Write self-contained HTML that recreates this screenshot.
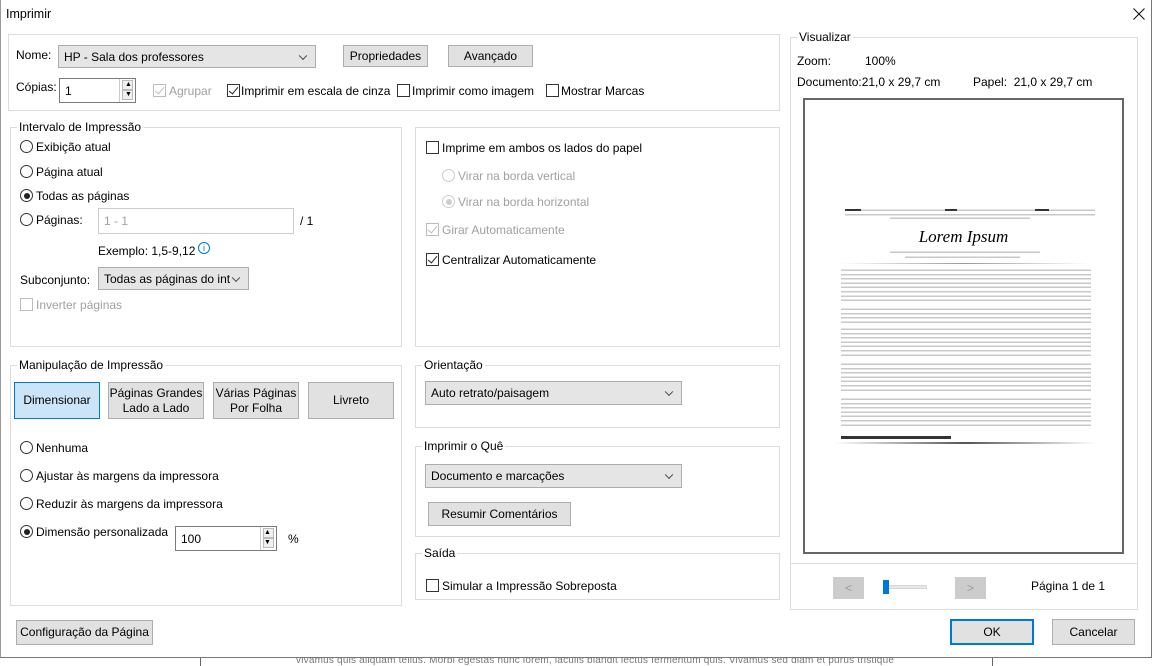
<!DOCTYPE html>
<html><head><meta charset="utf-8"><style>
*{box-sizing:border-box;margin:0;padding:0}
body{width:1155px;height:666px;overflow:hidden;background:#fff;font-family:"Liberation Sans",sans-serif;font-size:12px;color:#000;position:relative}
.a{position:absolute;white-space:nowrap}
.win{position:absolute;left:0;top:0;width:1152px;height:658px;background:#fff;border:1px solid #777;border-top:none;border-left:1px solid #999}
.grp{position:absolute;border:1px solid #dcdcdc}
.lg{position:absolute;background:#fff;padding:0 2px;top:-8px;left:6px;font-size:12px;white-space:nowrap}
.btn{position:absolute;background:#e1e1e1;border:1px solid #adadad;display:flex;align-items:center;justify-content:center;text-align:center;line-height:15px}
.sel{position:absolute;background:#e5e5e5;border:1px solid #adadad;padding-left:5px;display:flex;align-items:center;white-space:nowrap}
.sel:after{content:"";position:absolute;right:9px;top:50%;width:5px;height:5px;border-right:1px solid #444;border-bottom:1px solid #444;transform:translateY(-70%) rotate(45deg)}
.cb{position:absolute;width:13px;height:13px;border:1px solid #333;background:#fff}
.cb.ck:after{content:"";position:absolute;left:3px;top:0px;width:4px;height:8px;border-right:1.5px solid #222;border-bottom:1.5px solid #222;transform:rotate(40deg)}
.cb.dis{border-color:#bcbcbc}
.cb.dis.ck:after{border-color:#bcbcbc}
.rd{position:absolute;width:13px;height:13px;border:1px solid #333;border-radius:50%;background:#fff}
.rd.on:after{content:"";position:absolute;left:2.5px;top:2.5px;width:6px;height:6px;border-radius:50%;background:#222}
.rd.dis{border-color:#ccc}
.rd.dis.on:after{background:#ccc}
.gray{color:#a0a0a0}
.inp{position:absolute;border:1px solid #7a7a7a;background:#fff;padding-left:5px;display:flex;align-items:center}
.spin{position:absolute;right:0;top:0;width:16px;height:100%;border-left:1px solid #ccc}
.spin i{position:absolute;left:2px;width:11px;height:10px;background:#f0f0f0;border:1px solid #bbb}
.lines{position:absolute;background:repeating-linear-gradient(#fff 0,#fff 1.5px,#c8c8c8 1.5px,#c8c8c8 3px,#fff 3px,#fff 4.3px)}
</style></head><body>
<div class="a" style="left:200px;top:656px;width:1px;height:10px;background:#666"></div>
<div class="a" style="left:992px;top:656px;width:1px;height:10px;background:#666"></div>
<div class="a" style="left:296px;top:655px;font-size:10px;color:#777;letter-spacing:0.2px">vivamus quis aliquam tellus. Morbi egestas nunc lorem, iaculis blandit lectus fermentum quis. Vivamus sed diam et purus tristique</div>
<div class="win">
<div class="a" style="left:5px;top:7px;font-size:12.5px">Imprimir</div>
<svg class="a" style="left:1132px;top:8px" width="12" height="12" viewBox="0 0 12 12"><path d="M0.5 0.5L11.5 11.5M11.5 0.5L0.5 11.5" stroke="#111" stroke-width="1.1"/></svg>

<div class="grp" style="left:7px;top:34px;width:772px;height:77px"></div>
<div class="a" style="left:15px;top:48px">Nome:</div>
<div class="sel" style="left:57px;top:45px;width:258px;height:23px">HP - Sala dos professores</div>
<div class="btn" style="left:342px;top:45px;width:85px;height:22px">Propriedades</div>
<div class="btn" style="left:447px;top:45px;width:85px;height:22px">Avançado</div>
<div class="a" style="left:15px;top:80px">Cópias:</div>
<div class="inp" style="left:58px;top:78px;width:77px;height:25px">1<div class="spin"><i style="top:1px"></i><i style="top:11px"></i></div></div>
<div class="a" style="left:124px;top:81px;font-size:7px">▲</div><div class="a" style="left:124px;top:91px;font-size:7px">▼</div>
<div class="cb dis ck" style="left:152px;top:84px"></div><div class="a gray" style="left:168px;top:84px">Agrupar</div>
<div class="cb ck" style="left:226px;top:84px"></div><div class="a" style="left:240px;top:84px">Imprimir em escala de cinza</div>
<div class="cb" style="left:396px;top:84px"></div><div class="a" style="left:411px;top:84px">Imprimir como imagem</div>
<div class="cb" style="left:545px;top:84px"></div><div class="a" style="left:560px;top:84px">Mostrar Marcas</div>

<div class="grp" style="left:9px;top:127px;width:392px;height:220px"><div class="lg">Intervalo de Impressão</div></div>
<div class="rd" style="left:19px;top:140px"></div><div class="a" style="left:35px;top:140px">Exibição atual</div>
<div class="rd" style="left:19px;top:165px"></div><div class="a" style="left:35px;top:165px">Página atual</div>
<div class="rd on" style="left:19px;top:189px"></div><div class="a" style="left:35px;top:189px">Todas as páginas</div>
<div class="rd" style="left:19px;top:213px"></div><div class="a" style="left:35px;top:213px">Páginas:</div>
<div class="inp gray" style="left:97px;top:208px;width:196px;height:26px;border-color:#ccc">1 - 1</div>
<div class="a" style="left:299px;top:214px">/ 1</div>
<div class="a" style="left:97px;top:244px">Exemplo: 1,5-9,12</div>
<div class="a" style="left:197px;top:242px;width:12px;height:12px;border:1px solid #0078d7;border-radius:50%;color:#0078d7;font-size:9px;text-align:center;line-height:10px">i</div>
<div class="a" style="left:19px;top:273px">Subconjunto:</div>
<div class="sel" style="left:97px;top:267px;width:151px;height:23px;overflow:hidden"><span style="display:inline-block;width:126px;overflow:hidden">Todas as páginas do inte</span></div>
<div class="cb dis" style="left:19px;top:298px"></div><div class="a gray" style="left:35px;top:298px">Inverter páginas</div>

<div class="grp" style="left:414px;top:127px;width:365px;height:220px"></div>
<div class="cb" style="left:425px;top:141px"></div><div class="a" style="left:441px;top:141px">Imprime em ambos os lados do papel</div>
<div class="rd dis" style="left:441px;top:169px"></div><div class="a gray" style="left:457px;top:169px">Virar na borda vertical</div>
<div class="rd dis on" style="left:441px;top:195px"></div><div class="a gray" style="left:457px;top:195px">Virar na borda horizontal</div>
<div class="cb dis ck" style="left:425px;top:223px"></div><div class="a gray" style="left:441px;top:223px">Girar Automaticamente</div>
<div class="cb ck" style="left:425px;top:253px"></div><div class="a" style="left:441px;top:253px">Centralizar Automaticamente</div>

<div class="grp" style="left:9px;top:365px;width:392px;height:241px"><div class="lg">Manipulação de Impressão</div></div>
<div class="btn" style="left:13px;top:382px;width:86px;height:37px;background:#cce4f7;border-color:#0078d7">Dimensionar</div>
<div class="btn" style="left:107px;top:382px;width:96px;height:37px">Páginas Grandes<br>Lado a Lado</div>
<div class="btn" style="left:212px;top:382px;width:86px;height:37px">Várias Páginas<br>Por Folha</div>
<div class="btn" style="left:307px;top:382px;width:86px;height:37px">Livreto</div>
<div class="rd" style="left:19px;top:441px"></div><div class="a" style="left:35px;top:441px">Nenhuma</div>
<div class="rd" style="left:19px;top:469px"></div><div class="a" style="left:35px;top:469px">Ajustar às margens da impressora</div>
<div class="rd" style="left:19px;top:497px"></div><div class="a" style="left:35px;top:497px">Reduzir às margens da impressora</div>
<div class="rd on" style="left:19px;top:525px"></div><div class="a" style="left:35px;top:525px">Dimensão personalizada</div>
<div class="inp" style="left:174px;top:526px;width:102px;height:25px">100<div class="spin"><i style="top:1px"></i><i style="top:11px"></i></div></div>
<div class="a" style="left:263px;top:529px;font-size:7px">▲</div><div class="a" style="left:263px;top:539px;font-size:7px">▼</div>
<div class="a" style="left:287px;top:532px">%</div>

<div class="grp" style="left:414px;top:365px;width:365px;height:63px"><div class="lg">Orientação</div></div>
<div class="sel" style="left:424px;top:381px;width:257px;height:24px">Auto retrato/paisagem</div>
<div class="grp" style="left:414px;top:446px;width:365px;height:91px"><div class="lg">Imprimir o Quê</div></div>
<div class="sel" style="left:424px;top:464px;width:257px;height:24px">Documento e marcações</div>
<div class="btn" style="left:427px;top:502px;width:143px;height:24px">Resumir Comentários</div>
<div class="grp" style="left:414px;top:553px;width:365px;height:47px"><div class="lg">Saída</div></div>
<div class="cb" style="left:425px;top:579px"></div><div class="a" style="left:441px;top:579px">Simular a Impressão Sobreposta</div>

<div class="btn" style="left:15px;top:620px;width:137px;height:25px">Configuração da Página</div>

<div class="grp" style="left:789px;top:37px;width:348px;height:573px"><div class="lg">Visualizar</div></div>
<div class="a" style="left:796px;top:54px">Zoom:</div><div class="a" style="left:864px;top:54px">100%</div>
<div class="a" style="left:796px;top:75px">Documento:21,0 x 29,7 cm</div>
<div class="a" style="left:972px;top:75px">Papel:&nbsp; 21,0 x 29,7 cm</div>
<div class="a" style="left:802px;top:98px;width:321px;height:456px;border:2px solid #666;background:#fff;overflow:hidden">
 <div class="lines" style="left:40px;top:108px;width:250px;height:9px"></div>
 <div class="a" style="left:40px;top:109px;width:16px;height:2px;background:#333"></div>
 <div class="a" style="left:140px;top:109px;width:12px;height:2px;background:#333"></div>
 <div class="a" style="left:230px;top:109px;width:14px;height:2px;background:#333"></div>
 <div class="lines" style="left:85px;top:116px;width:140px;height:4px"></div>
 <div class="a" style="left:0;width:317px;top:127px;text-align:center;font-family:'Liberation Serif',serif;font-style:italic;font-size:17px">Lorem Ipsum</div>
 <div class="lines" style="left:85px;top:150px;width:150px;height:4px"></div>
 <div class="lines" style="left:100px;top:155px;width:115px;height:4px"></div>
 <div class="a" style="left:35px;top:163px;width:250px;height:1px;background:linear-gradient(90deg,#fff,#999,#fff)"></div>
 <div class="lines" style="left:36px;top:168px;width:250px;height:35px"></div>
 <div class="lines" style="left:36px;top:207px;width:250px;height:17px"></div>
 <div class="lines" style="left:36px;top:227px;width:250px;height:31px"></div>
 <div class="lines" style="left:36px;top:262px;width:250px;height:31px"></div>
 <div class="lines" style="left:36px;top:297px;width:250px;height:31px"></div>
 <div class="a" style="left:36px;top:336px;width:110px;height:3px;background:#333"></div>
 <div class="a" style="left:30px;top:342px;width:260px;height:2px;background:linear-gradient(90deg,#fff,#555,#fff)"></div>
</div>
<div class="a" style="left:790px;top:563px;width:346px;height:1px;background:#dcdcdc"></div>
<div class="btn" style="left:832px;top:577px;width:31px;height:22px;background:#ccc;border-color:#ccc;color:#999">&lt;</div>
<div class="a" style="left:882px;top:585px;width:44px;height:4px;background:#e7e7e7;border:1px solid #d6d6d6"></div>
<div class="a" style="left:882px;top:580px;width:6px;height:14px;background:#0078d7"></div>
<div class="btn" style="left:954px;top:577px;width:31px;height:22px;background:#ccc;border-color:#ccc;color:#999">&gt;</div>
<div class="a" style="left:1030px;top:579px">Página 1 de 1</div>
<div class="btn" style="left:949px;top:619px;width:84px;height:26px;border:2px solid #0078d7">OK</div>
<div class="btn" style="left:1051px;top:619px;width:83px;height:26px">Cancelar</div>
</div>
</body></html>
